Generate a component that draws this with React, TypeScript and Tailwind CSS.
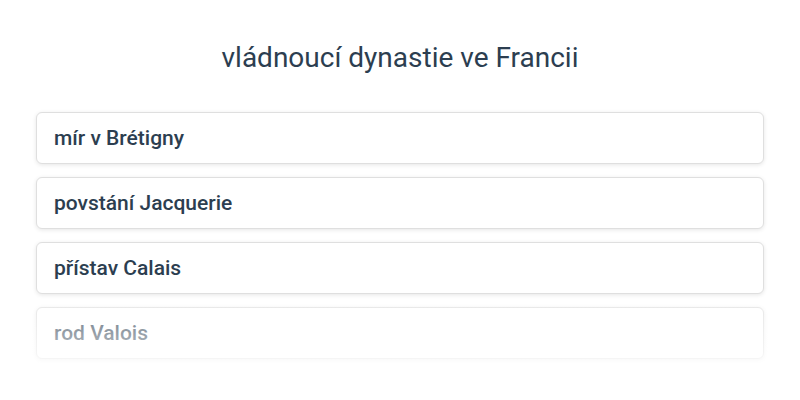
import React from 'react';

const ITEMS = ['mír v Brétigny', 'povstání Jacquerie', 'přístav Calais', 'rod Valois'];

export default function App() {
  return (
    <div className="min-h-screen bg-white px-9 pt-[42px]" style={{ fontFamily: 'Roboto, "Noto Sans", sans-serif' }}>
      <h1 className="text-center text-[28px] leading-8 text-[#2c3e50] font-normal mb-[38px]">
        vládnoucí dynastie ve Francii
      </h1>

      <div className="relative flex flex-col gap-[13px]">
        {ITEMS.map((item) => (
          <div
            key={item}
            className="rounded-md border border-[#dfdfdf] bg-white px-[17px] py-[11px] shadow-[0_1px_4px_rgba(0,0,0,0.1)]"
          >
            <span className="text-[21px] leading-7 font-medium text-[#2c3e50]">{item}</span>
          </div>
        ))}
        <div className="pointer-events-none absolute inset-x-[-8px] bottom-[-6px] h-[64px] bg-gradient-to-b from-white/25 to-white/75" />
      </div>
    </div>
  );
}
